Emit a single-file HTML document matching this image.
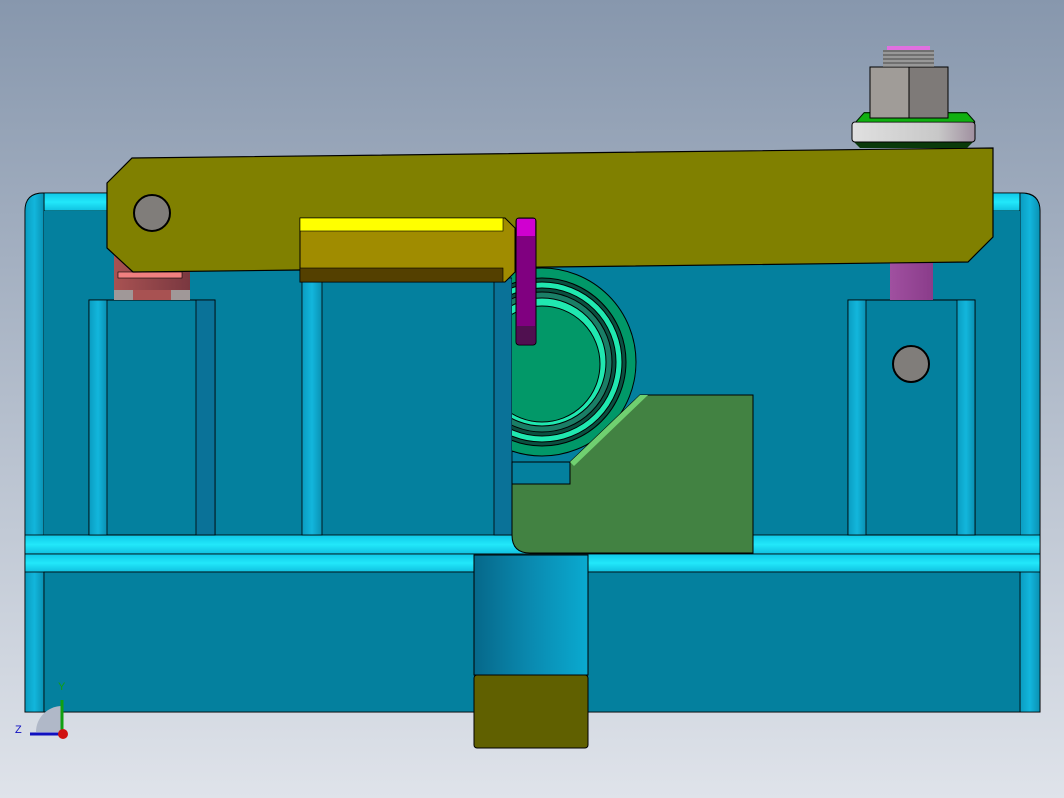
<!DOCTYPE html>
<html><head><style>html,body{margin:0;padding:0;width:1064px;height:798px;overflow:hidden}</style></head><body>
<svg width="1064" height="798" viewBox="0 0 1064 798" xmlns="http://www.w3.org/2000/svg" font-family="Liberation Sans, sans-serif">
<defs>
<linearGradient id="bg" x1="0" y1="0" x2="0" y2="1"><stop offset="0" stop-color="#8797ad"/><stop offset="1" stop-color="#dfe3ea"/></linearGradient>
<linearGradient id="tubeV" x1="0" y1="0" x2="1" y2="0"><stop offset="0" stop-color="#0a9cc0"/><stop offset=".5" stop-color="#12b6dc"/><stop offset="1" stop-color="#0a90b2"/></linearGradient>
<linearGradient id="tubeH" x1="0" y1="0" x2="0" y2="1"><stop offset="0" stop-color="#10c8e8"/><stop offset=".5" stop-color="#22e8fa"/><stop offset="1" stop-color="#10c0e0"/></linearGradient>
<linearGradient id="stub" x1="0" y1="0" x2="1" y2="0"><stop offset="0" stop-color="#06688a"/><stop offset=".5" stop-color="#0a8ab0"/><stop offset="1" stop-color="#0aaad0"/></linearGradient>
<linearGradient id="wash" x1="0" y1="0" x2="1" y2="0"><stop offset="0" stop-color="#e0e0e0"/><stop offset=".7" stop-color="#c8c8c8"/><stop offset="1" stop-color="#a090a0"/></linearGradient>
<linearGradient id="purp" x1="0" y1="0" x2="1" y2="0"><stop offset="0" stop-color="#a050a0"/><stop offset="1" stop-color="#8a3c8a"/></linearGradient>
<linearGradient id="red" x1="0" y1="0" x2="1" y2="0"><stop offset="0" stop-color="#a85252"/><stop offset="1" stop-color="#7a3840"/></linearGradient>
<clipPath id="cr"><rect x="512" y="0" width="600" height="600"/></clipPath>
</defs>
<rect width="1064" height="798" fill="url(#bg)"/>
<!-- main body -->
<path d="M25 211 Q25 193 43 193 H1022 Q1040 193 1040 211 V712 H25 Z" fill="#04809e" stroke="#000"/>
<path d="M44 193 H1020 V211 H44 Z" fill="url(#tubeH)" stroke="#000" stroke-width=".8"/>
<path d="M25 712 V211 Q25 193 44 193 V712 Z" fill="url(#tubeV)" stroke="#000" stroke-width=".8"/>
<path d="M1020 712 V193 Q1040 193 1040 211 V712 Z" fill="url(#tubeV)" stroke="#000" stroke-width=".8"/>
<rect x="44" y="211" width="976" height="324" fill="#04809e"/>
<rect x="25" y="535" width="1015" height="19" fill="url(#tubeH)" stroke="#000" stroke-width=".8"/>
<rect x="25" y="554" width="1015" height="18" fill="url(#tubeH)" stroke="#000" stroke-width=".8"/>
<rect x="44" y="572" width="976" height="140" fill="#04809e" stroke="#000" stroke-width=".8"/>
<!-- left block -->
<rect x="89" y="300" width="126" height="235" fill="#04809e" stroke="#000"/>
<rect x="89" y="300" width="18" height="235" fill="url(#tubeV)" stroke="#000" stroke-width=".8"/>
<rect x="196" y="300" width="19" height="235" fill="#0a7298" stroke="#000" stroke-width=".8"/>
<!-- middle tubes -->
<rect x="302" y="278" width="20" height="257" fill="url(#tubeV)" stroke="#000" stroke-width=".8"/>
<rect x="494" y="278" width="18" height="257" fill="#0a7298" stroke="#000" stroke-width=".8"/>
<!-- right block -->
<rect x="848" y="300" width="127" height="235" fill="#04809e" stroke="#000"/>
<rect x="848" y="300" width="18" height="235" fill="url(#tubeV)" stroke="#000" stroke-width=".8"/>
<rect x="957" y="300" width="18" height="235" fill="url(#tubeV)" stroke="#000" stroke-width=".8"/>
<circle cx="911" cy="364" r="18" fill="#807d7a" stroke="#000" stroke-width="2"/>
<!-- purple rod -->
<rect x="890" y="258" width="43" height="42" fill="url(#purp)"/>
<!-- red part -->
<rect x="114" y="255" width="76" height="36" fill="url(#red)"/>
<rect x="118" y="272" width="64" height="6" fill="#f08080" stroke="#000" stroke-width=".6"/>
<rect x="114" y="290" width="76" height="10" fill="#a09898"/>
<rect x="133" y="290" width="38" height="10" fill="#a85252"/>
<!-- green roller -->
<g clip-path="url(#cr)">
<circle cx="542" cy="362" r="94" fill="#019868" stroke="#000"/>
<circle cx="542" cy="362" r="84" fill="#0a5040" stroke="#000"/>
<circle cx="542" cy="362" r="80" fill="#20e8b0" stroke="#000"/>
<circle cx="542" cy="362" r="74" fill="#0a5040" stroke="#000"/>
<circle cx="542" cy="362" r="70" fill="#1a7e66" stroke="#000"/>
<circle cx="542" cy="362" r="64" fill="#20e8b0" stroke="#000"/>
<circle cx="542" cy="364" r="58" fill="#029868" stroke="#000"/>
</g>
<!-- green block -->
<rect x="512" y="462" width="58" height="22" fill="#04809e" stroke="#000"/>
<path d="M570 484 V462 L640 395 H753 V553 H530 Q512 553 512 535 V484 Z" fill="#428242" stroke="#000"/>
<path d="M570 462 L640 395 L648 395 L574 466 Z" fill="#70d070"/>
<!-- stub -->
<rect x="474" y="555" width="114" height="120" fill="url(#stub)" stroke="#000"/>
<rect x="474" y="675" width="114" height="73" rx="3" fill="#606000" stroke="#000"/>
<!-- lever -->
<path d="M107 183 L132 158 L993 148 L993 237 L968 262 L300 270 L133 272 L107 248 Z" fill="#808000" stroke="#000" stroke-width="1.2"/>
<circle cx="152" cy="213" r="18" fill="#807d7a" stroke="#000" stroke-width="2"/>
<!-- yellow hex bar -->
<path d="M300 218 H505 L515 228 V272 L505 282 H300 Z" fill="#a08c00" stroke="#000"/>
<rect x="300" y="218" width="203" height="13" fill="#ffff00" stroke="#000" stroke-width=".6"/>
<rect x="300" y="268" width="203" height="14" fill="#544000" stroke="#000" stroke-width=".6"/>
<!-- magenta link -->
<rect x="516" y="218" width="20" height="127" rx="3" fill="#800080" stroke="#000"/>
<rect x="517" y="219" width="18" height="17" fill="#d000d0"/>
<rect x="517" y="326" width="18" height="18" fill="#501050"/>
<!-- bolt -->
<path d="M856 121 L864 112 H967 L975 121 V140 L967 148 H860 L852 140 Z" fill="#0a3a0a"/>
<rect x="852" y="122" width="123" height="20" rx="3" fill="url(#wash)" stroke="#000"/>
<path d="M856 122 L864 113 H967 L975 122 Z" fill="#10b010" stroke="#000" stroke-width=".6"/>
<rect x="870" y="67" width="39" height="51" fill="#a09c98" stroke="#000"/>
<rect x="909" y="67" width="39" height="51" fill="#7e7a78" stroke="#000"/>
<rect x="883" y="50" width="51" height="17" fill="#707070"/>
<g stroke="#c0c0c0" stroke-width="1"><line x1="883" y1="53" x2="934" y2="53"/><line x1="883" y1="57" x2="934" y2="57"/><line x1="883" y1="61" x2="934" y2="61"/><line x1="883" y1="65" x2="934" y2="65"/></g>
<rect x="887" y="46" width="43" height="4" fill="#e070e0"/>
<!-- triad -->
<path d="M36 732 A26 26 0 0 1 62 706 V732 Z" fill="#b0b8c8"/>
<line x1="62" y1="734" x2="62" y2="700" stroke="#10a010" stroke-width="3"/>
<line x1="62" y1="734" x2="30" y2="734" stroke="#1010c0" stroke-width="3"/>
<circle cx="63" cy="734" r="5" fill="#d01010"/>
<text x="58" y="690" font-size="11" fill="#10a010">Y</text>
<text x="15" y="733" font-size="11" fill="#1010c0">Z</text>
</svg>
</body></html>
